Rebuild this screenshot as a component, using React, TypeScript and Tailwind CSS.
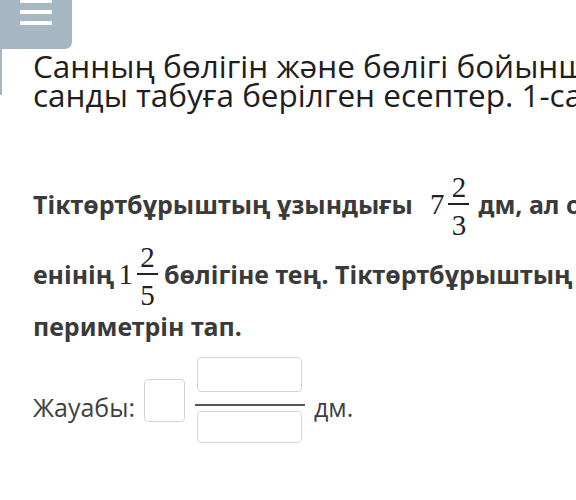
import React from "react";

function Frac({ whole, num, den }: { whole: string; num: string; den: string }) {
  return (
    <span className="inline-flex items-center font-['Liberation_Serif','DejaVu_Serif',serif] text-[29px] font-normal leading-none text-[#222]">
      <span className="mr-[4px]">{whole}</span>
      <span className="flex flex-col items-center">
        <span className="pb-[1px] pt-[5px] leading-[29px]">{num}</span>
        <span className="h-[1.5px] w-[21px] bg-[#222]" />
        <span className="pt-[6px] leading-[29px]">{den}</span>
      </span>
    </span>
  );
}

export default function App() {
  return (
    <div className="relative h-[500px] w-[576px] overflow-hidden bg-white">
      {/* меню */}
      <div className="absolute left-0 top-0 flex h-[49px] w-[72px] flex-col items-center gap-[7px] rounded-br-[7px] bg-[#a6b7c4]">
        <span className="-mt-[1px] h-[4px] w-[32px] bg-white" />
        <span className="h-[4px] w-[32px] bg-white" />
        <span className="h-[4px] w-[32px] bg-white" />
      </div>
      <div className="absolute left-0 top-[49px] h-[46px] w-[2px] bg-[#a6b7c4]" />

      <div className="w-[900px] pl-[33px] pt-[51px]">
        <h1 className="font-['Open_Sans',sans-serif] text-[31.5px] leading-[29px] font-normal text-[#1e1e1e]">
          Санның бөлігін және бөлігі бойынша
          <br />
          санды табуға берілген есептер. 1-сабақ
        </h1>

        <div className="mt-[60px] font-['Noto_Sans',sans-serif] text-[25px] font-bold leading-none text-[#3a3a3a]">
          <div className="flex h-[70px] items-center">
            <span>Тіктөртбұрыштың ұзындығы</span>
            <span className="ml-[17px]">
              <Frac whole="7" num="2" den="3" />
            </span>
            <span className="ml-[9px]">дм, ал оның ұзындығы</span>
          </div>
          <div className="flex h-[70px] items-center">
            <span>енінің</span>
            <span className="ml-[4px]">
              <Frac whole="1" num="2" den="5" />
            </span>
            <span className="ml-[6px]">бөлігіне тең. Тіктөртбұрыштың</span>
          </div>
          <div className="flex h-[34px] items-center">периметрін тап.</div>
        </div>

        <div className="mt-[14px] flex h-[86px] items-center font-['Open_Sans',sans-serif] text-[25px] leading-none text-[#3f3f3f]">
          <span className="pt-[14px]">Жауабы:</span>
          <span className="ml-[9px] h-[43px] w-[41px] rounded-[4px] border border-[#d4d4d4]" />
          <span className="ml-[10px] flex w-[110px] flex-col items-center">
            <span className="h-[35px] w-[105px] rounded-[4px] border border-[#d4d4d4]" />
            <span className="mb-[5px] mt-[12px] h-[2px] w-[110px] bg-[#555]" />
            <span className="h-[32px] w-[105px] rounded-[4px] border border-[#d4d4d4]" />
          </span>
          <span className="ml-[9px] pt-[14px]">дм.</span>
        </div>
      </div>
    </div>
  );
}
